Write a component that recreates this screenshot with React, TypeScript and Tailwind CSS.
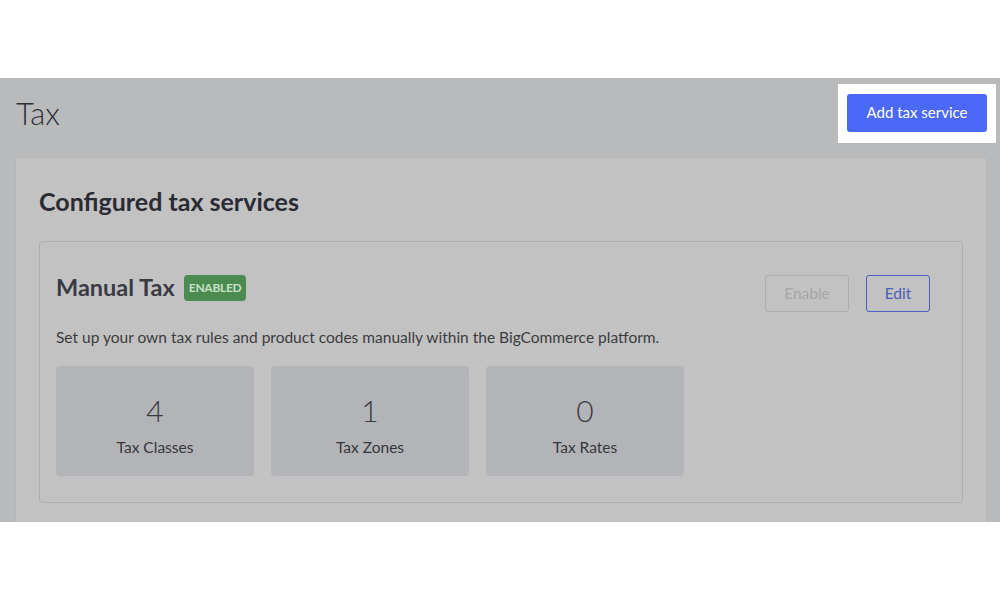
const stats = [
  { value: "4", label: "Tax Classes" },
  { value: "1", label: "Tax Zones" },
  { value: "0", label: "Tax Rates" },
];

function StatTile({ value, label }: { value: string; label: string }) {
  return (
    <div className="w-[198px] h-[110px] rounded-[4px] bg-[#b3b4b7] flex flex-col items-center pt-[26px]">
      <span className="text-[30px] leading-9 font-light text-[#3a3b40]">{value}</span>
      <span className="mt-[8px] text-[15.5px] leading-[22px] text-[#36373b]">{label}</span>
    </div>
  );
}

export default function App() {
  return (
    <div
      className="w-[1000px] h-[600px] bg-white flex flex-col overflow-hidden"
      style={{ fontFamily: "Lato, 'Noto Sans', sans-serif" }}
    >
      <div className="h-[78px] shrink-0" />
      <div className="h-[444px] shrink-0 bg-[#b9babc] px-4 pt-4 overflow-hidden">
        {/* page header */}
        <div className="flex items-center justify-between h-[38px]">
          <h1 className="text-[31px] font-light text-[#2f3036] leading-none">Tax</h1>
          <div className="bg-white px-[9px] pt-[10px] pb-[11px] -mr-[12px] -my-[10px]">
            <button
              type="button"
              className="h-[38px] w-[140px] rounded-[3px] bg-[#4b69f6] text-white text-[15px]"
            >
              Add tax service
            </button>
          </div>
        </div>

        {/* card */}
        <div className="mt-[26px] w-[970px] bg-[#c2c2c2] px-[23px] pt-[28px] pb-6 shadow-[0_1px_2px_rgba(0,0,0,0.08)]">
          <h2 className="text-[25px] leading-[30px] font-bold text-[#2a2b33]">Configured tax services</h2>

          <div className="mt-[25px] border border-[#afafb0] rounded-[4px] px-[16px] pt-[33px] pb-[26px]">
            <div className="flex items-start justify-between">
              <div className="flex items-center gap-[9px] h-[26px]">
                <span className="text-[23.5px] font-bold text-[#3a3b42] leading-none">Manual Tax</span>
                <span className="h-[26px] px-[5px] rounded-[4px] bg-[#4a8c4f] text-[#c8e0c8] text-[12px] font-bold flex items-center tracking-tight">
                  ENABLED
                </span>
              </div>
              <div className="flex gap-[17px] mr-[16px]">
                <button
                  type="button"
                  className="h-[37px] w-[84px] rounded-[3px] border border-[#acacad] text-[#a6a6a7] text-[15.5px]"
                >
                  Enable
                </button>
                <button
                  type="button"
                  className="h-[37px] w-[64px] rounded-[3px] border border-[#4d5ec4] text-[#4c5cb8] text-[15.5px]"
                >
                  Edit
                </button>
              </div>
            </div>

            <p className="mt-[14px] text-[15.5px] leading-[22px] text-[#3b3c40]">
              Set up your own tax rules and product codes manually within the BigCommerce platform.
            </p>

            <div className="mt-[18px] flex gap-[17px]">
              {stats.map((s) => (
                <StatTile key={s.label} value={s.value} label={s.label} />
              ))}
            </div>
          </div>
        </div>
      </div>
    </div>
  );
}
